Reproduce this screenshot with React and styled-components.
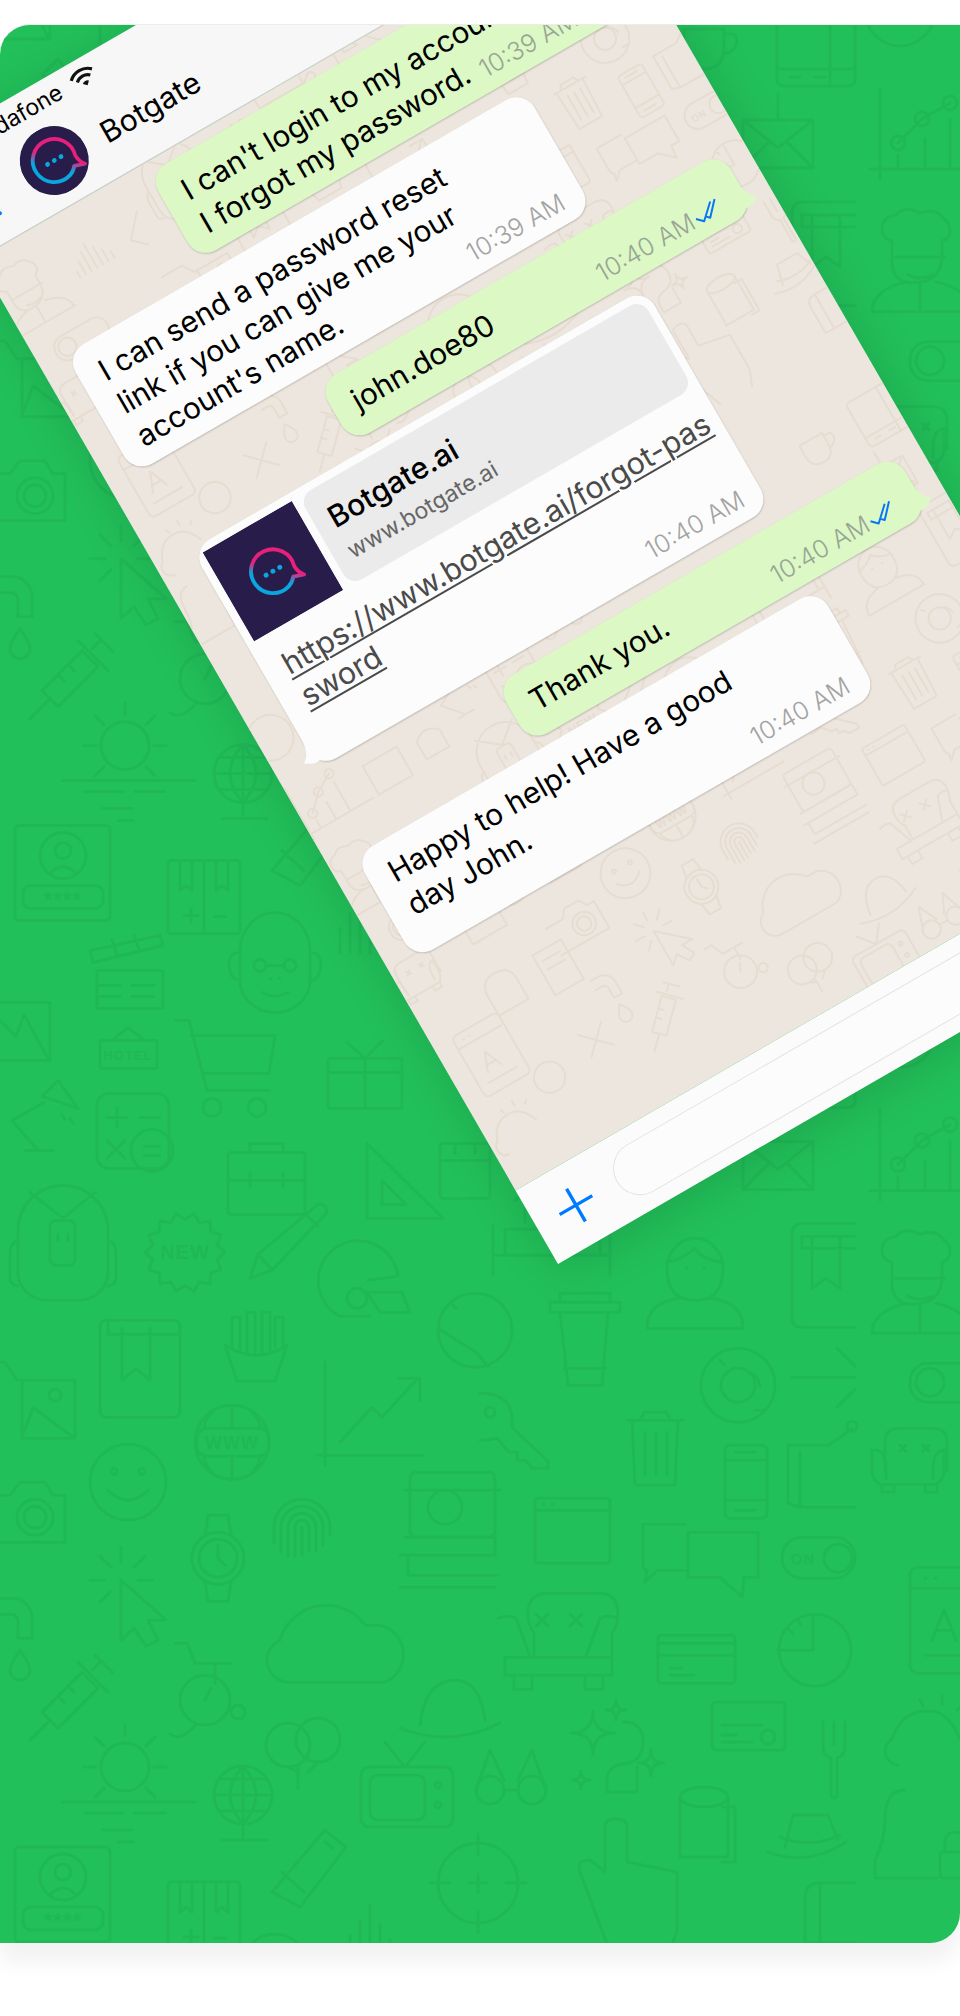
import React from "react";
import styled, { createGlobalStyle } from "styled-components";

const GlobalStyle = createGlobalStyle`
  html, body { margin: 0; padding: 0; background: #fff; }
  body { font-family: Inter, "Liberation Sans", sans-serif; }
`;

// doodle wallpaper, everything in page coordinates of the green hero
const spark = (x, y, r) =>
  `M${x} ${y - r}Q${x} ${y} ${x + r} ${y}Q${x} ${y} ${x} ${y + r}Q${x} ${y} ${x - r} ${y}Q${x} ${y} ${x} ${y - r}Z`;
const burst = (cx, cy, a, b, n) => {
  const pts = [];
  for (let i = 0; i < n * 2; i++) {
    const r = i % 2 ? b : a;
    const t = (i * Math.PI) / n;
    pts.push(`${(cx + r * Math.cos(t)).toFixed(1)} ${(cy + r * Math.sin(t)).toFixed(1)}`);
  }
  return `M${pts.join("L")}Z`;
};

const DOODLE_PATHS = [
  // sun + horizon
  "M125 702v12M84 745h12M154 745h12M95 715l9 9M155 715l-9 9M95 775l9-9M155 775l-9-9M62 780h133M85 791h38M135 791h30M102 808h30M118 820h15M170 712q8 6 18-2q5-3 8-8",
  // globe
  "M214 773h58M243 744v58M220 757h46M220 789h46M243 744q-26 29 0 58M243 744q26 29 0 58M222 818h45M243 802v16",
  // id card
  "M50 873q13-14 26 0",
  // open book
  "M204 860v73M180 860v30l6-5l6 5v-30M216 860v30l6-5l6 5v-30M184 915h14M191 908v14M214 916h12",
  // clapper
  "M90 950L160 935L163 945L93 962ZM100 985h20M132 985h22M132 996h22M100 996h20M112 939l5 15M134 934l5 15",
  // monkey
  "M240 950a35 38 0 0 1 70 0v30a35 32 0 0 1-70 0zM240 952q-14 0-10 18q2 10 10 10M310 952q14 0 10 18q-2 10-10 10M268 965h14M262 992q13 7 26 0M270 978h1M279 978h1",
  // picture frame
  "M-20 1002h70v58h-70zM-14 1040L0 1020L16 1036L24 1014L48 1058",
  // hotel sign
  "M112 1040L128 1027L145 1040",
  // cart
  "M175 1020h14l18 70h62M191 1035h84l-6 38H203",
  // gift
  "M365 1058v50M328 1072h74M365 1058l-18-16M365 1058l18-18",
  // lamp
  "M25 1150h28M38 1150L12 1120L44 1102M42 1096L58 1080L78 1108ZM62 1114l3 5M70 1118l3 5",
  // calculator
  "M117 1107v20M107 1117h20M140 1117h20M107 1140l18 18M125 1140l-18 18M144 1146h16M144 1155h16",
  // briefcase
  "M250 1152v-9h33v9M228 1180h77M250 1172v14M283 1172v14",
  // set square, calendar
  "M367 1143L443 1218H367ZM382 1180L406 1204H382ZM440 1160h50M455 1143v10M475 1143v10",
  // backpack
  "M18 1230a45 45 0 0 1 90 0v40a30 28 0 0 1-30 30h-30a30 28 0 0 1-30-30zM30 1192L63 1218L95 1192M18 1240q-8 2-8 14v24q0 6 8 8M108 1240q8 2 8 14v24q0 6-8 8M58 1234v6M68 1234v6",
  burst(185, 1252, 40, 33, 14),
  // pencil
  "M250 1278l8-24l60-50q8-2 9 8l-55 58zM258 1254l14 16M306 1214l12 12",
  // helmet
  "M340 1316a40 40 0 1 1 58-40l-30 4M367 1292h35l8 20h-30zM340 1316h30",
  // ball
  "M438 1328l38 24l12 14M450 1302l6 6",
  // bookmark book
  "M108 1334h72M122 1328v52l14-12l14 12v-52M108 1320v14",
  // fries
  "M225 1345l12 36h38l12-36q-30 20-62 0M232 1347v-30h8v32M247 1352v-40h8v40M262 1352v-40h8v40M275 1347v-30h8v30",
  // chart arrow
  "M325 1362v103M317 1455h105M340 1442l32-35l10 10l35-38M398 1378h22v22",
  // photos
  "M-30 1362h35l12 18h58v58H22v-58M24 1432L33 1407L50 1420L72 1436",
  // www
  "M232 1405v23M232 1456v23M212 1412q-8 8-8 16M252 1412q8 8 8 16M212 1472q-8-8-8-16M252 1472q8-8 8-16",
  // smiley
  "M108 1490q20 20 40 0",
  // camera
  "M-20 1495h30l10-13h25l8 13h12v47h-85",
  // watch
  "M205 1535l3-20h20l3 20M205 1581l3 20h20l3-20M218 1545v13l7 7",
  // fingerprint
  "M274 1542v-15a28 28 0 0 1 56 0v8M281 1552v-25a21 21 0 0 1 42 0v18M288 1556v-29a14 14 0 0 1 28 0v24M295 1556v-29a7 7 0 0 1 14 0v24M302 1527v28",
  // polaroid
  "M400 1555h95M405 1537h90v18M400 1587h95M408 1555v20h90M405 1490h95",
  // cursor
  "M121 1580v60l13-12l12 18l12-6l-10-20h18zM121 1547v15M100 1556l11 11M145 1556l-11 11M90 1580h15M138 1580h15M100 1602l11-11",
  // cloud
  "M290 1682a22 22 0 0 1-10-42a48 48 0 0 1 85-15h15a30 30 0 0 1 5 57z",
  // faucet, drop
  "M0 1598h10a20 20 0 0 1 22 20v20h-14v-16q0-8-8-8h-10M20 1650q-10 14-10 20a10 10 0 0 0 20 0q0-6-10-20z",
  // syringe
  "M42 1712L82 1672L98 1688L58 1728ZM30 1740L50 1720M78 1662L108 1692M92 1670l8-8M95 1655l18 18M58 1696l6 6M68 1686l6 6",
  // wheelchair
  "M175 1643h12l8 20h35M215 1663v20M205 1700l6-12",
  // balloons + strings
  "M298 1768v20M318 1762l-10 10M288 1767l10 5",
  // fedora
  "M400 1728q50 20 100-5M420 1725q5-45 35-45q25 0 30 40",
  // tv
  "M405 1767l-20-25M405 1767l20-25",
  // glasses / drops
  "M504 1790h14M476 1790l14-40l14 30M518 1780l14-30l14 40",
  // sparkles
  spark(593, 1733, 22), spark(616, 1710, 10), spark(651, 1763, 13), spark(581, 1780, 9),
  "M623 1722q20 0 20 20q0 20-20 22q-16 2-16 16v12h30v-25",
  // kitchen roll
  "M680 775a24 10 0 0 1 48 0v60h-48zM680 775a24 10 0 0 0 48 0M722 785h13v55h-13",
  // hat
  "M768 830q40 15 78-10M785 825l8-32h35l10 25M780 815q30 12 60-2",
  // bust + lock
  "M905 768q-20 0-20 30q0 20-10 40v18h62M945 830v-10a10 10 0 0 1 20 0v10",
  // pointing hand
  "M612 935L580 850q-4-12 10-12l15 12V805q0-8 10-8q12 0 12 8V840l50 10v60l-10 25",
  // usb
  "M272 870L325 808L346 825L300 885ZM282 850l22 20M325 820l8 6",
  // target
  "M478 812v20M478 890v20M430 861h20M506 861h20M478 852v18M469 861h18",
  // wave
  "M340 953v-25M350 953v-40M360 953v-55M370 953v-70M380 953v-50M390 953v-35M400 953v-30M410 953v-15",
  // notebook
  "M855 861h-35q-15 0-15 15V921h50M820 861v60",
  // mug
  "M684 1050h40v18q0 22-20 22q-20 0-20-22zM724 1055h8q5 0 5 8q-2 10-13 12",
  // landscape phone
  "M777 1090h78M830 1030v77M790 1098h10M815 1098h10",
  // envelope
  "M743 1141h70v48h-70zM743 1141l35 28l35-28M743 1189l26-26M813 1189l-26-26M778 1115v26",
  // chart with dots
  "M880 1109v91M870 1190h120M898 1176v14M925 1160v30M950 1140v50M898 1164L922 1140L950 1124",
  // bed
  "M493 1225v50M610 1225v50M493 1255h117M505 1255v-26h95v26M515 1200l10-8v30",
  // man
  "M667 1268a28 30 0 0 1 56 0q0 32-28 32q-28 0-28-32zM667 1262q14-2 28-14q8 12 28 14M647 1328q0-26 33-30M743 1328q0-26-33-30M647 1328h96M686 1268h1M704 1268h1",
  // bookmark book (cut at seam)
  "M855 1223h-53q-10 0-10 12v82q0 10 10 10h53M802 1236h53M812 1236v52l14-10l14 10v-52M802 1236v12h53",
  // chef
  "M892 1262q-10-2-10-12q0-12 14-14q8-10 24-2q16-6 24 6q6 4 6 12q0 8-8 10v14q0 28-30 28q-22 0-20-28zM895 1278h50M910 1278h1M930 1278h1M872 1333q0-22 34-30M970 1333q0-22-34-30M872 1333h100M920 1303v30M908 1296q12 6 24 0",
  // coffee cup
  "M560 1302v-9h50v9M550 1302h70v10h-70zM560 1312l8 73h34l6-73M564 1368h42",
  // donut
  "M720 1360l4 4M755 1410h10M748 1372q10 2 12 14",
  // arrow
  "M792 1377h63M837 1348l18 18M837 1407l18-18",
  // key
  "M480 1393q30 0 32 24v10l36 34v7h-16l-7-8h-8v-8h-8l-12-14q-10 2-17 2",
  // trash
  "M628 1420h55M640 1420l4-8h22l5 8M632 1420l3 65h40l3-65M645 1432v42M656 1432v42M667 1432v42",
  // phone
  "M725 1460h42M725 1500h42M735 1452h20M735 1510h20",
  // pinned note
  "M788 1445h40l8-5M788 1445v58l12 4h55M800 1452v55M836 1440l16-12",
  // small sofa
  "M885 1470v-28q0-14 14-14h34q14 0 14 14v28M872 1450q14-2 14 20v8M947 1450q-14-2-14 20v8M872 1450v20q0 10 8 14h56q8-4 8-14v-20M882 1484v8h12v-8M925 1484v8h12v-8M900 1445l6 6M906 1445l-6 6M923 1445l6 6M929 1445l-6 6",
  // browser
  "M535 1510h75M543 1504h1M552 1504h1",
  // chat bubbles
  "M687 1570h-30l-12 12l2-12q-4 0-4-6v-40h42M700 1577l-12 0V1532h70v45h-14l-2 20l-22-20z",
  // armchair
  "M534 1655v-22q-6-8-6-20q0-20 20-20h50q20 0 20 20q0 12-6 20v22M498 1618q10-4 18 0l14 38M618 1618q-10-4-18 0l-14 38M505 1657h107v18h-107zM514 1675v14h18v-14M585 1675v14h18v-14M536 1614l12 12M548 1614l-12 12M570 1614l12 12M582 1614l-12 12",
  // credit card
  "M658 1643h77M658 1655h77M670 1668h12M670 1675h24",
  // pie clock
  "M813 1615v35h-35M788 1628l5 6M798 1620l3 5",
  // doc with A
  "M910 1588h75M925 1578h1M935 1578h1M932 1640l12-30l12 30M935 1630h18M925 1655h50",
  // card 2
  "M722 1725h40M722 1735h14M722 1742h30",
  // fork
  "M823 1722v24q0 10 8 12v36q0 4 3 4q3 0 3-4v-36q8-2 8-12v-24M834 1722v22",
  // weather cloud
  "M898 1765a14 14 0 0 1-6-26q10-30 38-28q18 0 30 28M920 1700l3 6M942 1696v8M962 1706l-5 4",
];

const DOODLE_CIRCLES = [
  [125, 745, 24], [243, 773, 29], [63, 855, 23], [63, 850, 8], [260, 965, 6], [290, 965, 6],
  [212, 1107, 9], [257, 1107, 9], [152, 1150, 21], [357, 1298, 10], [475, 1330, 37], [55, 1395, 6],
  [232, 1442, 37], [128, 1482, 38], [114, 1471, 3], [142, 1471, 3], [35, 1517, 18], [35, 1517, 11],
  [218, 1558, 26], [218, 1558, 19], [445, 1507, 17], [205, 1700, 25], [238, 1712, 7], [288, 1745, 22],
  [318, 1740, 22], [438, 1785, 3], [438, 1805, 3], [490, 1790, 14], [532, 1790, 14], [478, 861, 40],
  [900, 1032, 35], [898, 1164, 7], [922, 1140, 7], [950, 1124, 7], [738, 1385, 37], [738, 1385, 17],
  [930, 1382, 14], [490, 1412, 5], [838, 1558, 14], [768, 1737, 7], [815, 1650, 36], [852, 1426, 5],
];

const DOODLE_RECTS = [
  [15, 825, 95, 95, 4], [23, 885, 80, 23, 8], [168, 860, 72, 73, 3], [97, 970, 66, 38, 2],
  [100, 1040, 57, 28, 2], [328, 1058, 74, 50, 2], [97, 1093, 72, 75, 12], [228, 1152, 77, 62, 3],
  [440, 1143, 50, 55, 3], [50, 1220, 25, 45, 6], [100, 1320, 80, 97, 6], [197, 1428, 72, 28, 10],
  [410, 1472, 85, 65, 6], [361, 1767, 92, 60, 8], [370, 1775, 55, 45, 8], [940, 830, 30, 26, 3],
  [777, 1030, 78, 77, 6], [910, 1363, 90, 39, 18], [725, 1445, 42, 73, 5], [535, 1498, 75, 65, 3],
  [782, 1537, 73, 41, 20], [658, 1635, 77, 48, 3], [910, 1567, 80, 106, 8], [712, 1702, 73, 48, 4],
];

const DOODLE_WORDS = [
  ["****", 63, 906, 22], ["HOTEL", 128, 1060, 13], ["NEW", 185, 1259, 20], ["WWW", 232, 1449, 18],
  ["ON", 803, 1564, 15],
];

// extras that only show up on the phone wallpaper (tile wraps further right than the page)
const WALL_EXTRA_PATHS = [
  "M1000 1300v-10M1010 1300v-22M1020 1300v-34M1030 1300v-42M1040 1300v-30M1050 1300v-20M1060 1300v-12M1095 1290l30-34M1095 1290l20 18",
  "M1010 1410h60v50h-60zM1010 1425h60M1100 1395a22 22 0 1 1 0 44a22 22 0 1 1 0-44",
  "M990 1540q0-26 26-26q26 0 26 26v34h-52zM1080 1520h50v70h-50zM1090 1535h30M1090 1550h30",
  "M1010 1670a24 24 0 1 1 0 48a24 24 0 1 1 0-48M1080 1660l40 40M1120 1660l-40 40",
  "M990 850h70v60h-70zM1000 870h50M1000 885h50M1095 840q25 0 25 25q0 25-25 25q-25 0-25-25q0-25 25-25",
  "M1000 1000l50 50M1000 1050l50-50M1090 1000h40v60h-40z",
  "M1000 1140h60v50h-60zM1090 1150q20-20 40 0v30h-40z",
];

const DoodleArt = ({ extras, showWord }) => (
  <>
    {DOODLE_PATHS.map((d, i) => (
      <path key={i} d={d} />
    ))}
    {DOODLE_CIRCLES.map(([cx, cy, r], i) => (
      <circle key={i} cx={cx} cy={cy} r={r} />
    ))}
    {DOODLE_RECTS.map(([x, y, w, h, r], i) => (
      <rect key={i} x={x} y={y} width={w} height={h} rx={r} />
    ))}
    {DOODLE_WORDS.filter(([, x, y]) => showWord(x, y)).map(([t, x, y, s], i) => (
      <DoodleWord key={i} x={x} y={y} fontSize={s}>
        {t}
      </DoodleWord>
    ))}
    {extras && WALL_EXTRA_PATHS.map((d, i) => <path key={i} d={d} />)}
  </>
);

const DoodleWord = styled.text`
  font-family: "Liberation Sans", sans-serif;
  font-weight: 700;
  text-anchor: middle;
  fill: currentColor;
  stroke: none;
  letter-spacing: 1px;
`;

const DoodleLayer = styled.svg`
  position: absolute;
  inset: 0;
  width: 100%;
  height: 100%;
  fill: none;
  stroke: currentColor;
  stroke-width: ${(p) => p.$stroke};
  stroke-linecap: round;
  stroke-linejoin: round;
  color: ${(p) => p.$color};
`;

const Page = styled.div`
  padding: 24px 0 74px;
  background: #fff;
`;

const Hero = styled.section`
  position: relative;
  height: 1919px;
  overflow: hidden;
  background: #22c05a;
  border-top: 1px solid #ececec;
  box-sizing: border-box;
  border-radius: 30px 0 30px 0;
`;

const HeroShadow = styled.div`
  border-radius: 30px 0 30px 0;
  box-shadow: 0 20px 20px rgba(0, 0, 0, 0.05);
`;

const Phone = styled.div`
  position: absolute;
  left: 558px;
  top: -45px;
  width: 722px;
  height: 1284px;
  display: flex;
  flex-direction: column;
  transform: rotate(-30deg);
  transform-origin: 0 100%;
  box-shadow: 0 8px 50px rgba(0, 0, 0, 0.14);
`;

const Header = styled.header`
  height: 124px;
  flex: none;
  box-sizing: border-box;
  background: #f7f7f7;
  border-bottom: 1px solid #c9c9c9;
  color: #000;
`;

const StatusRow = styled.div`
  display: flex;
  align-items: center;
  gap: 12px;
  height: 38px;
  padding-left: 52px;
  font-size: 23px;
`;

const ChatRow = styled.div`
  display: flex;
  align-items: center;
  height: 76px;
  padding-left: 20px;
`;

const BackIcon = styled.svg`
  width: 26px;
  height: 44px;
  fill: none;
  stroke: #007aff;
  stroke-width: 4;
  stroke-linecap: round;
  stroke-linejoin: round;
`;

const Avatar = styled.div`
  width: 69px;
  height: 69px;
  flex: none;
  margin-left: 35px;
  border-radius: 50%;
  overflow: hidden;
`;

const ChatTitle = styled.div`
  margin: 3px 0 0 20px;
  font-size: 30px;
  letter-spacing: 0.2px;
`;

const Wall = styled.main`
  position: relative;
  flex: 1;
  overflow: hidden;
  background: #ede6df;
`;

const Messages = styled.div`
  position: relative;
  display: flex;
  flex-direction: column;
  padding-top: 11px;
`;

const Bubble = styled.div`
  position: relative;
  box-sizing: border-box;
  width: ${(p) => p.$width}px;
  margin-top: ${(p) => p.$top || 0}px;
  padding: 14px 22px ${(p) => p.$bottom}px;
  align-self: ${(p) => (p.$sent ? "flex-end" : "flex-start")};
  margin-right: ${(p) => (p.$sent ? 25 : 0)}px;
  margin-left: ${(p) => (p.$sent ? 0 : p.$left || 28)}px;
  border-radius: 21px;
  background: ${(p) => (p.$sent ? "#dcf8c4" : "#fcfcfc")};
  color: #000;
  font-size: 29.8px;
  line-height: 38px;
  box-shadow: 0 1px 2px rgba(0, 0, 0, 0.2);
  &::after {
    content: ${(p) => (p.$tail ? '""' : "none")};
    position: absolute;
    bottom: 6px;
    ${(p) => (p.$tail === "right" ? "right: -10px;" : "left: -10px; transform: scaleX(-1);")}
    width: 20px;
    height: 30px;
    background: inherit;
    clip-path: path("M9 0C10 12 13 22 20 24C16 27 12 30 8 30H0V0Z");
  }
`;

const MessageTime = styled.span`
  position: absolute;
  right: ${(p) => p.$right}px;
  bottom: ${(p) => p.$bottom || 9}px;
  display: flex;
  align-items: center;
  gap: 2px;
  font-size: 25px;
  font-weight: 300;
  line-height: 28px;
  color: ${(p) => (p.$sent ? "#99a596" : "#a3a3a3")};
`;

const Ticks = styled.svg`
  width: 28px;
  height: 20px;
  fill: none;
  stroke: #0a76f6;
  stroke-width: 2;
  stroke-linejoin: round;
`;

const LinkPreview = styled.div`
  display: flex;
  gap: 8px;
  margin: -6px -14px 18px;
`;

const PreviewImage = styled.div`
  width: 103px;
  height: 103px;
  flex: none;
`;

const PreviewCard = styled.div`
  flex: 1;
  display: flex;
  flex-direction: column;
  justify-content: center;
  padding-left: 16px;
  background: #ebebeb;
  border-radius: 14px;
`;

const PreviewTitle = styled.div`
  font-size: 30px;
  font-weight: 500;
  line-height: 36px;
`;

const PreviewUrl = styled.div`
  margin-top: 7px;
  font-size: 23px;
  line-height: 26px;
  color: #666;
`;

const LinkText = styled.a`
  display: block;
  white-space: nowrap;
  color: #4a4a4a;
  font-size: 30.4px;
  line-height: 37px;
  text-decoration: underline;
  text-decoration-thickness: 1.5px;
  text-underline-offset: 4px;
`;

const Footer = styled.footer`
  height: 85px;
  flex: none;
  display: flex;
  align-items: center;
  padding-left: 26px;
  box-sizing: border-box;
  background: #fbfbfb;
`;

const PlusIcon = styled.svg`
  width: 38px;
  height: 38px;
  flex: none;
  stroke: #007aff;
  stroke-width: 3.4;
`;

const InputPill = styled.div`
  flex: 1;
  height: 54px;
  margin: 0 20px 0 28px;
  box-sizing: border-box;
  background: #fcfcfc;
  border: 1px solid #e4e4e4;
  border-radius: 27px;
`;

const BotLogo = ({ id, ring }) => (
  <svg viewBox="0 0 100 100" width="100%" height="100%" style={{ display: "block" }}>
    <defs>
      <linearGradient id={id} x1="0.2" y1="0.8" x2="0.75" y2="0.25">
        <stop offset="0.3" stopColor="#0aa6df" />
        <stop offset="0.62" stopColor="#e8207c" />
      </linearGradient>
    </defs>
    <rect width="100" height="100" fill="#281d4a" />
    <g transform={`translate(50 50) scale(${ring}) translate(-50 -50)`}>
      <path
        d="M74 57A25 25 0 1 0 57 74Q63 72 67 67L79 71Q74 65 74 57Z"
        fill="none"
        stroke={`url(#${id})`}
        strokeWidth="4.4"
        strokeLinejoin="round"
      />
      <circle cx="41" cy="50" r="2.8" fill="#0aa6df" />
      <circle cx="50" cy="50" r="2.8" fill="#0aa6df" />
      <circle cx="59" cy="50" r="2.8" fill="#0aa6df" />
    </g>
  </svg>
);

const TickMarks = () => (
  <Ticks viewBox="0 0 28 20">
    <path d="M1 11l6 6L22 3M11 14l3 3L27 3" />
  </Ticks>
);

const App = () => {
  const pageRows = [-1022, 0, 1022];
  const wallCols = [-1138, 0];
  const wallRows = [-2044, -1022];
  return (
    <>
      <GlobalStyle />
      <Page>
        <HeroShadow>
          <Hero>
            <DoodleLayer $color="#20b857" $stroke={3} viewBox="0 0 960 1919" preserveAspectRatio="none">
              <g transform="translate(0,-24)">
                {pageRows.map((dy) => (
                  <g key={dy} transform={`translate(0,${dy})`}>
                    <DoodleArt showWord={(x, y) => y + dy > 40 && y + dy < 1930} />
                  </g>
                ))}
              </g>
            </DoodleLayer>
            <Phone>
              <Header>
                <StatusRow>
                  <span>Vodafone</span>
                  <svg width="28" height="22" viewBox="0 0 28 22" fill="none" stroke="#111" strokeWidth="3.2">
                    <path d="M2 8a17 17 0 0 1 24 0M6.5 12.5a11 11 0 0 1 15 0" />
                    <path d="M10.5 16.5l3.5 3.5l3.5-3.5a5 5 0 0 0-7 0z" fill="#111" stroke="none" />
                  </svg>
                </StatusRow>
                <ChatRow>
                  <BackIcon viewBox="0 0 26 44">
                    <path d="M22 3L3 22l19 19" />
                  </BackIcon>
                  <Avatar>
                    <BotLogo id="logo-avatar" ring={1.25} />
                  </Avatar>
                  <ChatTitle>Botgate</ChatTitle>
                </ChatRow>
              </Header>
              <Wall>
                <DoodleLayer $color="#e6dcd0" $stroke={3} viewBox="0 0 722 1075" preserveAspectRatio="none">
                  <g transform="translate(170,554) scale(.655)">
                    {wallRows.map((dy) =>
                      wallCols.map((dx) => (
                        <g key={`${dx}${dy}`} transform={`translate(${dx},${dy})`}>
                          <DoodleArt
                            extras
                            showWord={(x, y) => {
                              const lx = 170 + (x + dx) * 0.655;
                              const ly = 554 + (y + dy) * 0.655;
                              return lx > 20 && lx < 700 && ly > 20 && ly < 1055;
                            }}
                          />
                        </g>
                      ))
                    )}
                  </g>
                </DoodleLayer>
                <Messages>
                  <Bubble $sent $tail="right" $width={507} $bottom={10}>
                    I can't login to my account.
                    <br />I forgot my password.
                    <MessageTime $sent $right={28}>
                      10:39 AM
                      <TickMarks />
                    </MessageTime>
                  </Bubble>
                  <Bubble $width={530} $top={15} $bottom={10}>
                    I can send a password reset
                    <br />
                    link if you can give me your
                    <br />
                    account's name.
                    <MessageTime $right={22}>10:39 AM</MessageTime>
                  </Bubble>
                  <Bubble $sent $tail="right" $width={465} $top={14} $bottom={16}>
                    john.doe80
                    <MessageTime $sent $right={28}>
                      10:40 AM
                      <TickMarks />
                    </MessageTime>
                  </Bubble>
                  <Bubble $tail="left" $width={523} $left={40} $top={12} $bottom={50}>
                    <LinkPreview>
                      <PreviewImage>
                        <BotLogo id="logo-preview" ring={0.85} />
                      </PreviewImage>
                      <PreviewCard>
                        <PreviewTitle>Botgate.ai</PreviewTitle>
                        <PreviewUrl>www.botgate.ai</PreviewUrl>
                      </PreviewCard>
                    </LinkPreview>
                    <LinkText>
                      https://www.botgate.ai/forgot-pas
                      <br />
                      sword
                    </LinkText>
                    <MessageTime $right={20}>10:40 AM</MessageTime>
                  </Bubble>
                  <Bubble $sent $tail="right" $width={461} $top={16} $bottom={16}>
                    Thank you.
                    <MessageTime $sent $right={28}>
                      10:40 AM
                      <TickMarks />
                    </MessageTime>
                  </Bubble>
                  <Bubble $width={535} $top={10} $bottom={30}>
                    Happy to help! Have a good
                    <br />
                    day John.
                    <MessageTime $right={22}>10:40 AM</MessageTime>
                  </Bubble>
                </Messages>
              </Wall>
              <Footer>
                <PlusIcon viewBox="0 0 38 38">
                  <path d="M19 0v38M0 19h38" />
                </PlusIcon>
                <InputPill />
              </Footer>
            </Phone>
          </Hero>
        </HeroShadow>
      </Page>
    </>
  );
};

export default App;
